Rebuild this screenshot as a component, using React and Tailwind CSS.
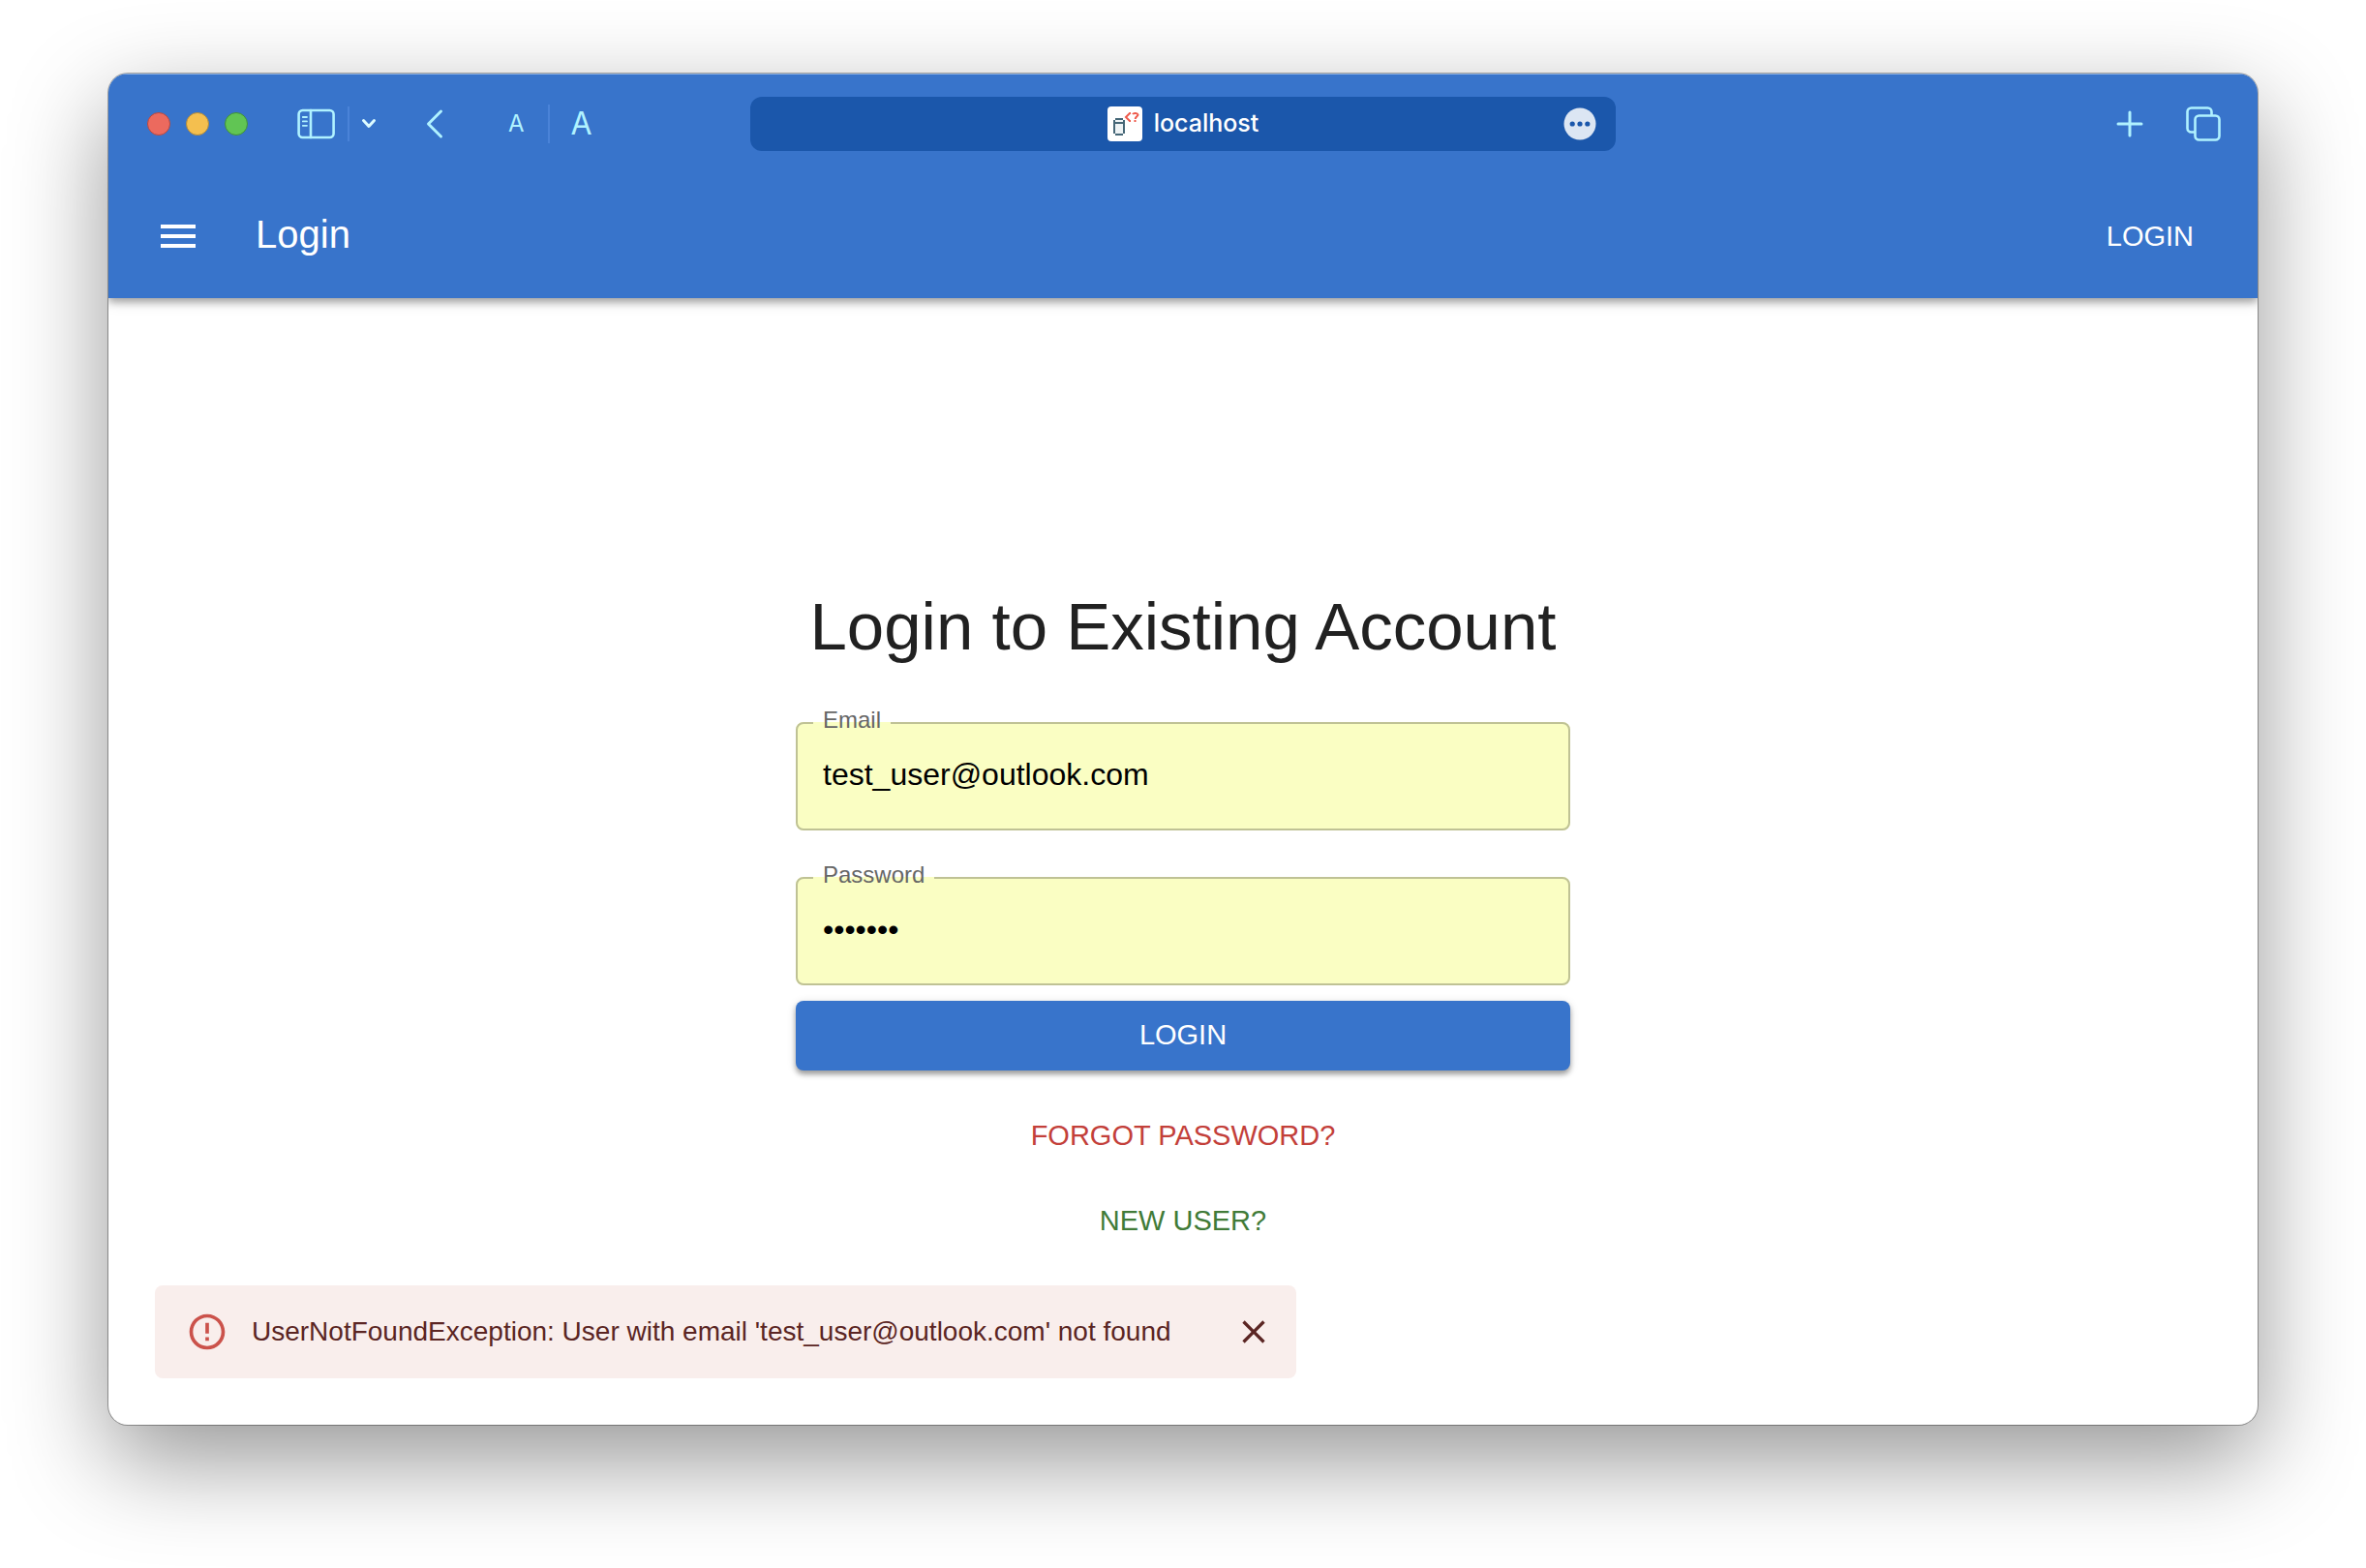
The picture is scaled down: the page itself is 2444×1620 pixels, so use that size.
function SidebarIcon() {
  return (
    <svg width="40" height="32" viewBox="0 0 40 32" fill="none" stroke="currentColor" strokeWidth="2.6" strokeLinecap="round">
      <rect x="1.6" y="2" width="36" height="28" rx="4" />
      <path d="M14 2v28" />
      <path d="M5.8 9h4.200M5.800 13.400h4.200M5.800 17.800h4.200" strokeWidth="1.8" />
    </svg>
  );
}

function Favicon() {
  return (
    <svg width="36" height="36" viewBox="0 0 36 36" fill="none">
      <rect width="36" height="36" rx="4" fill="#fff" />
      <rect x="8" y="14" width="8" height="14" fill="#eef3f5" />
      <path d="M8 13h8M8 29h8M7 14v14M17 14v14M7 17h10" stroke="#466777" strokeWidth="2" />
      <path d="M24 7h-1l-4 4l4 4h1" stroke="#ee5a4b" strokeWidth="2" />
      <path d="M26 8c1-1.500 5-1.500 5.500 .5c0 1.800-2.500 1.800-2.800 4.500M28.500 14v2" stroke="#ee5a4b" strokeWidth="2" />
    </svg>
  );
}

function Field({ id, label, type, value }) {
  return (
    <fieldset className="min-w-0 rounded-lg border-2 border-[#bfc295] bg-[#fafec3]">
      <legend className="ml-4 px-2.5 pb-1.5 text-2xl leading-5 text-[#666]">
        <label htmlFor={id}>{label}</label>
      </legend>
      <input
        id={id}
        type={type}
        defaultValue={value}
        className="block h-24 w-full rounded-lg bg-transparent px-[26px] pb-4 text-[32px] text-black outline-none"
      />
    </fieldset>
  );
}

export default function App() {
  return (
    <div className="flex min-h-screen flex-col bg-white px-28 pt-[76px] pb-[148px] font-['Liberation_Sans',Arial,sans-serif]">
      <div className="flex flex-1 flex-col overflow-hidden rounded-[20px] bg-white shadow-[0_0_0_1px_rgba(0,0,0,0.32),0_36px_100px_rgba(0,0,0,0.42)]">
        <header className="relative border-t border-[#8fb3e3] bg-[#3874cb] shadow-[0_4px_8px_rgba(0,0,0,0.3),0_2px_16px_rgba(0,0,0,0.16)]">
          <div className="grid h-[103px] grid-cols-[1fr_894px_1fr] items-center pb-0.5 text-[#b0f2ff]">
            <div className="flex items-center pl-10">
              <div className="flex gap-4">
                <button aria-label="Close window" className="size-6 rounded-full border border-[#b9483f] bg-[#ec6a5e]" />
                <button aria-label="Minimize window" className="size-6 rounded-full border border-[#b08a3c] bg-[#f4bf4f]" />
                <button aria-label="Zoom window" className="size-6 rounded-full border border-[#3f8f3a] bg-[#61c554]" />
              </div>
              <button aria-label="Show sidebar" className="ml-[51px]">
                <SidebarIcon />
              </button>
              <span className="ml-3 h-9 w-0.5 bg-[#4a83d8]" />
              <button aria-label="Tab groups" className="ml-3 text-[#dcfbff]">
                <svg width="16" height="12" viewBox="0 0 16 12" fill="none" stroke="currentColor" strokeWidth="3" strokeLinecap="round" strokeLinejoin="round">
                  <path d="M2.500 2.500L8 8.500l5.500-6" />
                </svg>
              </button>
              <button aria-label="Back" className="ml-[50px]">
                <svg width="20" height="32" viewBox="0 0 20 32" fill="none" stroke="currentColor" strokeWidth="3" strokeLinecap="round" strokeLinejoin="round">
                  <path d="M16.500 3L3.500 16l13 13" />
                </svg>
              </button>
              <button aria-label="Smaller text" className="ml-[66px] font-['Inter',sans-serif] text-2xl leading-8">
                A
              </button>
              <span className="ml-6 h-10 w-0.5 bg-[#4a83d8]" />
              <button aria-label="Larger text" className="ml-[22px] font-['Inter',sans-serif] text-[32px] leading-8">
                A
              </button>
            </div>
            <div className="grid h-14 grid-cols-[1fr_auto_1fr] items-center rounded-xl bg-[#1b57ab]">
              <a href="#" className="col-start-2 flex items-center gap-3 font-['Inter',sans-serif] text-[25px] font-medium text-white">
                <Favicon />
                localhost
              </a>
              <button aria-label="Page options" className="mr-5 justify-self-end">
                <svg width="34" height="34" viewBox="0 0 34 34">
                  <circle cx="17" cy="17" r="16.500" fill="#dce6f3" />
                  <g fill="#1b57ab">
                    <circle cx="9.200" cy="17" r="2.600" />
                    <circle cx="17" cy="17" r="2.600" />
                    <circle cx="24.800" cy="17" r="2.600" />
                  </g>
                </svg>
              </button>
            </div>
            <div className="flex items-center justify-end gap-11 pr-[38px]">
              <button aria-label="New tab">
                <svg width="28" height="28" viewBox="0 0 28 28" stroke="currentColor" strokeWidth="3" strokeLinecap="round">
                  <path d="M14 2v24M2 14h24" />
                </svg>
              </button>
              <button aria-label="Tab overview">
                <svg width="36" height="36" viewBox="0 0 36 36" fill="none" stroke="currentColor" strokeWidth="2.600">
                  <rect x="9.500" y="9.500" width="25" height="25" rx="4" />
                  <path d="M9.500 26.500H5.500a4 4 0 0 1-4-4V5.500a4 4 0 0 1 4-4h17a4 4 0 0 1 4 4v4" />
                </svg>
              </button>
            </div>
          </div>
          <div className="flex h-32 items-center pr-12 pl-12 text-white">
            <button aria-label="Menu">
              <svg width="48" height="48" viewBox="0 0 24 24" fill="currentColor">
                <path d="M3 18h18v-2H3v2zm0-5h18v-2H3v2zm0-7v2h18V6H3z" />
              </svg>
            </button>
            <h1 className="ml-14 flex-1 pb-1 text-[40px] leading-[64px]">Login</h1>
            <button className="px-[18px] text-[29px] leading-12">LOGIN</button>
          </div>
        </header>

        <main className="flex flex-1 flex-col px-12 pt-[298px] pb-12">
          <form className="mx-auto flex w-full max-w-[800px] flex-col" onSubmit={(e) => e.preventDefault()}>
            <h2 className="mb-11 text-center text-[69px] leading-[84px] whitespace-nowrap text-[#212121]">
              Login to Existing Account
            </h2>
            <div className="flex flex-col gap-9">
              <Field id="email" label="Email" type="email" value="test_user@outlook.com" />
              <Field id="password" label="Password" type="password" value="hunter2" />
            </div>
            <button
              type="submit"
              className="mt-4 h-[72px] rounded-lg bg-[#3874cb] text-[29px] text-white shadow-[0_4px_5px_rgba(0,0,0,0.3),0_2px_10px_rgba(0,0,0,0.16)]"
            >
              LOGIN
            </button>
            <button type="button" className="mt-8 h-[72px] self-center px-4 text-[29px] text-[#c3403a]">
              FORGOT PASSWORD?
            </button>
            <button type="button" className="mt-4 h-[72px] self-center px-4 text-[29px] text-[#417b38]">
              NEW USER?
            </button>
          </form>
          <div
            role="alert"
            className="mt-auto flex h-24 w-full max-w-[1179px] items-center rounded-lg bg-[#f9eeec] pr-6 pl-8 text-[#5b2523]"
          >
            <svg width="44" height="44" viewBox="0 0 24 24" fill="#cb524b">
              <path d="M11 15h2v2h-2zm0-8h2v6h-2zm.99-5C6.470 2 2 6.480 2 12s4.470 10 9.990 10C17.520 22 22 17.520 22 12S17.520 2 11.990 2zM12 20c-4.420 0-8-3.580-8-8s3.580-8 8-8 8 3.580 8 8-3.580 8-8 8z" />
            </svg>
            <p className="ml-6 flex-1 text-[28px] leading-10">
              UserNotFoundException: User with email 'test_user@outlook.com' not found
            </p>
            <button aria-label="Close">
              <svg width="40" height="40" viewBox="0 0 24 24" fill="currentColor">
                <path d="M19 6.410L17.590 5 12 10.590 6.410 5 5 6.410 10.590 12 5 17.590 6.410 19 12 13.410 17.590 19 19 17.590 13.410 12z" />
              </svg>
            </button>
          </div>
        </main>
      </div>
    </div>
  );
}
